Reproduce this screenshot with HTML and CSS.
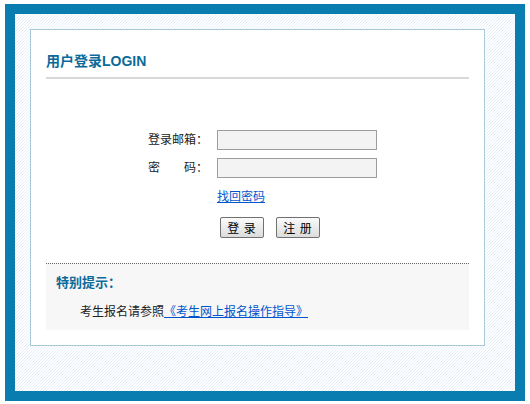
FILE: index.html
```html
<!DOCTYPE html>
<html lang="zh-CN">
<head>
<meta charset="utf-8">
<title>用户登录</title>
<link rel="stylesheet" href="styles.css">
</head>
<body>
<div class="frame">
  <div class="card">
    <h2 class="title">用户登录LOGIN</h2>
    <form class="login">
      <label class="lbl" for="email">登录邮箱：</label>
      <input class="field" id="email" type="text">
      <label class="lbl" for="pwd">密&emsp;&emsp;码：</label>
      <input class="field" id="pwd" type="password">
      <span></span>
      <a class="forgot" href="#">找回密码</a>
      <span></span>
      <div class="btns">
        <button type="button" class="btn">登&nbsp;录</button>
        <button type="button" class="btn">注&nbsp;册</button>
      </div>
    </form>
    <div class="tips">
      <div class="tips-title">特别提示：</div>
      <div class="tips-text">考生报名请参照<a href="#">《考生网上报名操作指导》</a></div>
    </div>
  </div>
</div>
</body>
</html>
```
FILE: styles.css
```css
html, body {
  margin: 0;
  padding: 0;
  background: #fff;
  font-family: "Liberation Sans", "Noto Sans CJK SC", sans-serif;
  font-size: 12px;
  color: #222;
}
.frame {
  margin: 4px 5px;
  border: 10px solid #0a7db0;
  padding: 15px 0 0 15px;
  width: 485px;
  height: 362px;
  background-color: #fff;
  background-image: linear-gradient(135deg, transparent 0 40%, #e6eff9 40% 60%, transparent 60%);
  background-size: 3px 3px;
}
.card {
  width: 423px;
  height: 315px;
  background: #fff;
  border: 1px solid #a9c9d9;
  padding: 0 15px;
}
.title {
  margin: 0;
  padding: 21px 0 6px;
  line-height: 20px;
  font-size: 14px;
  font-weight: bold;
  color: #0b6a99;
  border-bottom: 2px solid #d9d9d9;
}
.login {
  margin: 51px 0 0;
  padding-left: 102px;
  display: grid;
  grid-template-columns: 60px 160px;
  column-gap: 9px;
  row-gap: 8px;
  align-items: center;
}
.lbl {
  line-height: 20px;
  white-space: nowrap;
}
.field {
  box-sizing: border-box;
  width: 160px;
  height: 20px;
  margin: 0;
  border: 1px solid #9c9c9c;
  background: #f3f3f3;
  padding: 0 3px;
}
.forgot {
  line-height: 20px;
  margin-top: 1px;
  color: #0055cc;
  text-decoration: underline;
}
.btns {
  margin-top: 2px;
  padding-left: 3px;
  display: flex;
  gap: 12px;
}
.btn {
  width: 44px;
  height: 21px;
  padding: 0;
  font-family: "Noto Sans CJK SC", sans-serif;
  font-size: 12px;
  line-height: 17px;
  letter-spacing: 1px;
  color: #000;
  border: 1px solid #707070;
  border-radius: 2px;
  background: linear-gradient(#fbfbfb, #dcdcdc);
}
.tips {
  margin-top: 25px;
  border-top: 1px dotted #666;
  background: #f7f7f7;
  padding: 10px 10px 9px;
}
.tips-title {
  line-height: 18px;
  font-size: 13px;
  font-weight: bold;
  color: #0b6a99;
}
.tips-text {
  margin-top: 11px;
  line-height: 18px;
  padding-left: 24px;
}
.tips-text a {
  color: #0055cc;
  text-decoration: underline;
}
```
